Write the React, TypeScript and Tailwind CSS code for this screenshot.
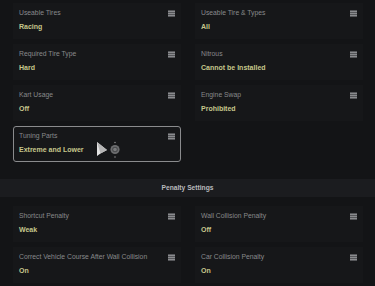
import React from 'react'

type Setting = { label: string; value: string; selected?: boolean }

const raceSettings: Setting[] = [
  { label: 'Useable Tires', value: 'Racing' },
  { label: 'Useable Tire & Types', value: 'All' },
  { label: 'Required Tire Type', value: 'Hard' },
  { label: 'Nitrous', value: 'Cannot be Installed' },
  { label: 'Kart Usage', value: 'Off' },
  { label: 'Engine Swap', value: 'Prohibited' },
  { label: 'Tuning Parts', value: 'Extreme and Lower', selected: true },
]

const penaltySettings: Setting[] = [
  { label: 'Shortcut Penalty', value: 'Weak' },
  { label: 'Wall Collision Penalty', value: 'Off' },
  { label: 'Correct Vehicle Course After Wall Collision', value: 'On' },
  { label: 'Car Collision Penalty', value: 'On' },
]

function MenuIcon() {
  return (
    <svg width="7" height="7" viewBox="0 0 7 7" className="shrink-0">
      <rect x="0" y="0" width="7" height="7" fill="#555659" />
      <rect x="0" y="1" width="7" height="1" fill="#8a8b8e" />
      <rect x="0" y="3" width="7" height="1" fill="#8a8b8e" />
      <rect x="0" y="5" width="7" height="1" fill="#8a8b8e" />
    </svg>
  )
}

function Cursor() {
  return (
    <div className="absolute left-[96px] top-[141px] pointer-events-none">
      <svg width="26" height="20" viewBox="0 0 26 20">
        {/* pointer */}
        <polygon points="1,1 1,15 4.5,12.5 11,9" fill="#e2e2e2" />
        <polygon points="1,1 11,9 4.5,12.5" fill="#b5b5b5" />
        {/* stick indicator */}
        <circle cx="19" cy="1.5" r="0.8" fill="#858585" />
        <circle cx="19" cy="8.5" r="4.6" fill="#6c6d6f" />
        <circle cx="19" cy="8.5" r="2.8" fill="#48494b" />
        <circle cx="19" cy="8.5" r="1.8" fill="#7a7b7d" />
        <circle cx="19" cy="16" r="0.8" fill="#858585" />
      </svg>
    </div>
  )
}

function SettingCard({ s }: { s: Setting }) {
  return (
    <div
      className={
        s.selected
          ? 'h-[36px] rounded-[3px] border border-[#8a8b8d] bg-[#161719] px-[5px] pt-[5px]'
          : 'h-[36px] bg-[#161719] px-[6px] pt-[6px]'
      }
    >
      <div className="flex items-center justify-between h-[8px]">
        <span className="text-[6.8px] leading-[8px] text-[#88898b] whitespace-nowrap">{s.label}</span>
        <MenuIcon />
      </div>
      <div className="mt-[6px] text-[7px] leading-[8px] font-bold text-[#c6c78c] whitespace-nowrap">
        {s.value}
      </div>
    </div>
  )
}

export default function App() {
  return (
    <div
      className="relative w-[375px] h-[286px] overflow-hidden bg-[#131416]"
      style={{ fontFamily: '"Liberation Sans", Arial, sans-serif' }}
    >
      <div className="grid grid-cols-2 gap-x-[14px] gap-y-[5px] pl-[13px] pr-[12px] pt-[3px]">
        {raceSettings.map((s) => (
          <SettingCard key={s.label} s={s} />
        ))}
      </div>

      {/* Section header */}
      <div className="mt-[17px] h-[18px] flex items-center justify-center bg-[#1b1c1f]">
        <span className="text-[6.7px] font-bold text-[#b9babc]">Penalty Settings</span>
      </div>

      <div className="grid grid-cols-2 gap-x-[14px] gap-y-[5px] pl-[13px] pr-[12px] pt-[9px]">
        {penaltySettings.map((s) => (
          <SettingCard key={s.label} s={s} />
        ))}
      </div>

      <Cursor />
    </div>
  )
}
